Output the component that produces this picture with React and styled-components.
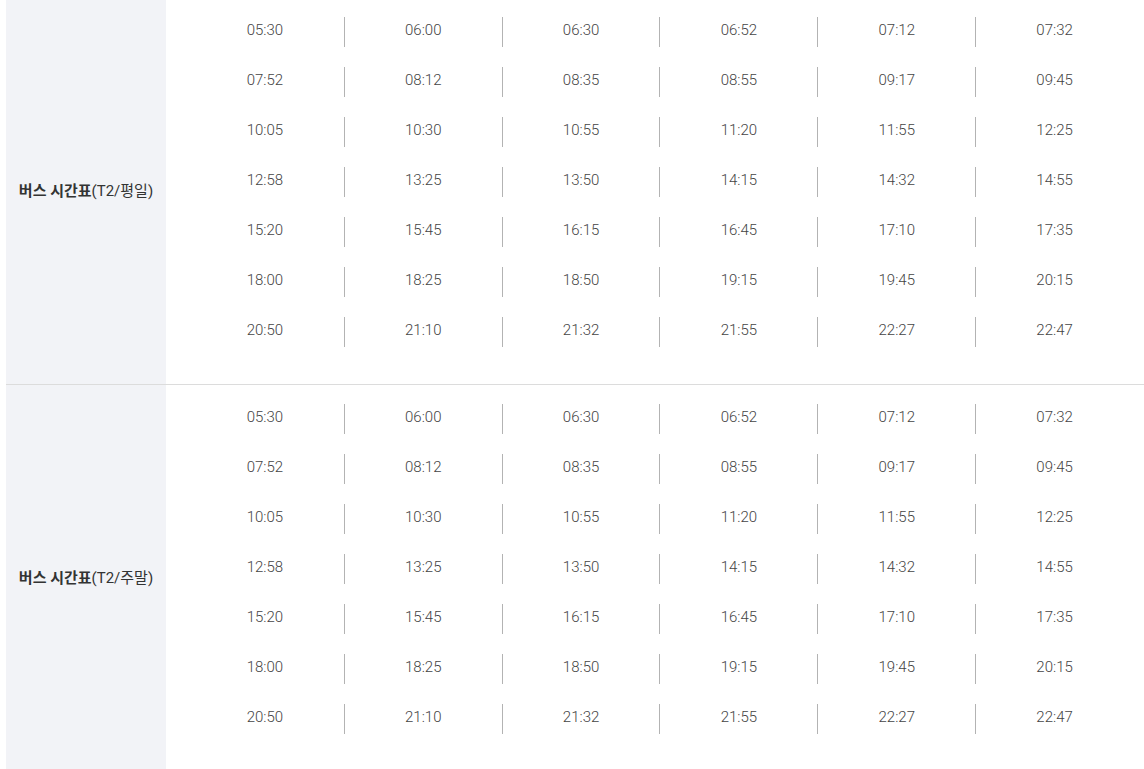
import React from "react";
import styled, { createGlobalStyle } from "styled-components";

const Global = createGlobalStyle`
  html, body { margin: 0; padding: 0; background: #fff; overflow: hidden; }
  body { font-family: Roboto, "Noto Sans CJK KR", sans-serif; }
`;

const Table = styled.div`
  margin: -2px 0 0 6px;
  width: 1138px;
`;

const Section = styled.section`
  display: flex;
  border-top: ${(p) => (p.$first ? "none" : "1px solid #dcdcdc")};
`;

const Label = styled.div`
  width: 160px;
  flex: none;
  background: #f2f3f7;
  display: flex;
  align-items: center;
  justify-content: center;
  font-size: 15px;
  color: #333;
  padding-bottom: 3px;
  box-sizing: border-box;
`;

const Strong = styled.strong`
  font-weight: 700;
`;

const Times = styled.div`
  flex: 1;
  padding: 19px 11px 17px 20px;
`;

const Row = styled.ul`
  list-style: none;
  margin: 0 0 20px;
  padding: 0;
  display: grid;
  grid-template-columns: repeat(6, 1fr);
`;

const Cell = styled.li`
  height: 30px;
  display: flex;
  align-items: center;
  justify-content: center;
  font-size: 15px;
  font-weight: 300;
  color: #444;
  border-left: ${(p) => (p.$first ? "none" : "1px solid #b3b3b3")};
  padding-bottom: 5px;
  box-sizing: border-box;
`;

const times = [
  ["05:30", "06:00", "06:30", "06:52", "07:12", "07:32"],
  ["07:52", "08:12", "08:35", "08:55", "09:17", "09:45"],
  ["10:05", "10:30", "10:55", "11:20", "11:55", "12:25"],
  ["12:58", "13:25", "13:50", "14:15", "14:32", "14:55"],
  ["15:20", "15:45", "16:15", "16:45", "17:10", "17:35"],
  ["18:00", "18:25", "18:50", "19:15", "19:45", "20:15"],
  ["20:50", "21:10", "21:32", "21:55", "22:27", "22:47"],
];

const sections = [
  { title: "버스 시간표", sub: "(T2/평일)" },
  { title: "버스 시간표", sub: "(T2/주말)" },
];

export default function App() {
  return (
    <>
      <Global />
      <Table>
        {sections.map((s, i) => (
          <Section key={i} $first={i === 0}>
            <Label>
              <Strong>{s.title}</Strong>
              <span>{s.sub}</span>
            </Label>
            <Times>
              {times.map((row, r) => (
                <Row key={r}>
                  {row.map((t, c) => (
                    <Cell key={c} $first={c === 0}>
                      {t}
                    </Cell>
                  ))}
                </Row>
              ))}
            </Times>
          </Section>
        ))}
      </Table>
    </>
  );
}
